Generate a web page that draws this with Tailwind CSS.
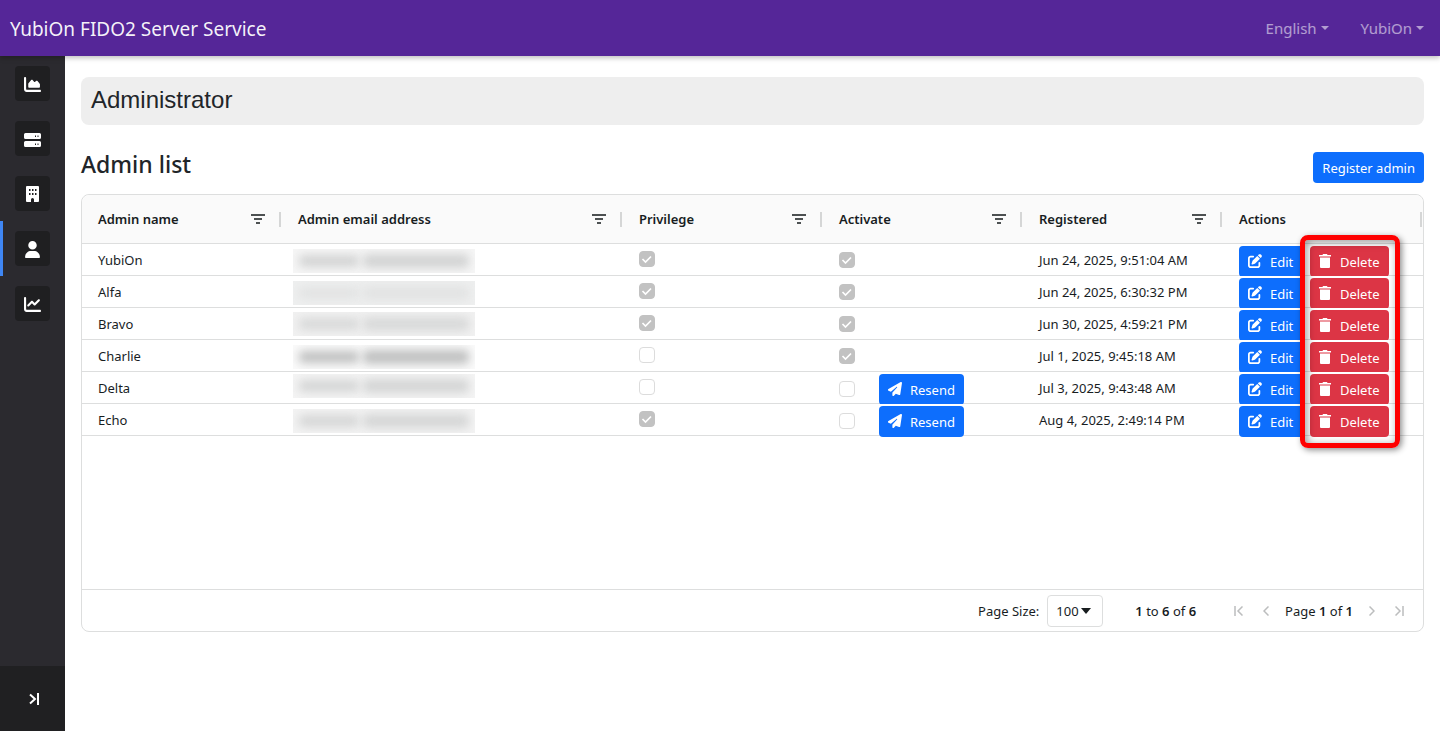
<!DOCTYPE html>
<html lang="en">
<head>
<meta charset="utf-8">
<meta name="viewport" content="width=device-width, initial-scale=1">
<title>YubiOn FIDO2 Server Service</title>
<script src="https://cdn.jsdelivr.net/npm/@tailwindcss/browser@4"></script>
</head>
<body class="flex min-h-screen flex-col bg-white font-['Segoe_UI','Noto_Sans',sans-serif] text-[13px] text-[#181d1f]">
<svg class="hidden" aria-hidden="true">
  <symbol id="area" viewBox="0 0 512 512"><path d="M64 64c0-17.7-14.3-32-32-32S0 46.3 0 64V400c0 44.2 35.8 80 80 80H480c17.7 0 32-14.3 32-32s-14.3-32-32-32H80c-8.8 0-16-7.2-16-16V64zm96 288H448c17.7 0 32-14.3 32-32V251.8c0-7.6-2.7-15-7.7-20.8l-65.8-76.8c-12.1-14.2-33.7-15-46.9-1.8l-21 21c-10 10-26.4 9.2-35.4-1.6l-39.2-47c-12.6-15.1-35.7-15.4-48.7-.6L135.9 215c-5.1 5.8-7.9 13.3-7.9 21.1v84c0 17.7 14.3 32 32 32z"/></symbol>
  <symbol id="server" viewBox="0 0 17 17"><path fill-rule="evenodd" d="M1.500 2h14A1.500 1.500 0 0 1 17 3.500v3A1.500 1.500 0 0 1 15.500 8h-14A1.500 1.500 0 0 1 0 6.500v-3A1.500 1.500 0 0 1 1.500 2ZM11 4.500v1.500h1V4.500Zm2.500 0v1.500h1V4.500ZM1.500 10h14a1.500 1.500 0 0 1 1.500 1.500v3a1.500 1.500 0 0 1-1.500 1.500h-14A1.500 1.500 0 0 1 0 14.500v-3A1.500 1.500 0 0 1 1.500 10ZM11 12.500v1.500h1v-1.500Zm2.500 0v1.500h1v-1.500Z"/></symbol>
  <symbol id="building" viewBox="0 0 13 16"><path fill-rule="evenodd" d="M1 0h11a1 1 0 0 1 1 1v14a1 1 0 0 1-1 1H8v-2.500a1.500 1.500 0 0 0-3 0V16H1a1 1 0 0 1-1-1V1a1 1 0 0 1 1-1ZM3 3v2h1.500V3Zm3 0v2h1.500V3Zm3 0v2h1.500V3ZM3 7v2h1.500V7Zm3 0v2h1.500V7Zm3 0v2h1.500V7Z"/></symbol>
  <symbol id="user" viewBox="0 0 448 512"><path d="M224 256A128 128 0 1 0 224 0a128 128 0 1 0 0 256zm-45.7 48C79.8 304 0 383.8 0 482.3C0 498.7 13.3 512 29.7 512H418.3c16.4 0 29.7-13.3 29.7-29.7C448 383.8 368.2 304 269.7 304H178.3z"/></symbol>
  <symbol id="line" viewBox="0 0 512 512"><path d="M64 64c0-17.7-14.3-32-32-32S0 46.3 0 64V400c0 44.2 35.8 80 80 80H480c17.7 0 32-14.3 32-32s-14.3-32-32-32H80c-8.8 0-16-7.2-16-16V64zm406.6 86.6c12.5-12.5 12.5-32.8 0-45.3s-32.8-12.5-45.3 0L320 210.7l-57.4-57.4c-12.5-12.5-32.8-12.5-45.3 0l-112 112c-12.5 12.5-12.5 32.8 0 45.3s32.8 12.5 45.3 0L240 221.3l57.4 57.4c12.5 12.5 32.8 12.5 45.3 0l128-128z"/></symbol>
  <symbol id="trash" viewBox="0 0 12 14"><path d="M4 0h4l.5 1H12v1.500H0V1h3.500ZM1 3.500h10V13a1 1 0 0 1-1 1H2a1 1 0 0 1-1-1Z"/></symbol>
  <symbol id="edit" viewBox="0 0 512 512"><path d="M471.6 21.7c-21.9-21.9-57.3-21.9-79.2 0L362.3 51.7l97.9 97.9 30.1-30.1c21.9-21.9 21.9-57.3 0-79.2L471.6 21.7zm-299.2 220c-6.1 6.1-10.8 13.6-13.5 21.9l-29.6 88.8c-2.9 8.6-.6 18.1 5.8 24.6s15.9 8.7 24.6 5.8l88.8-29.6c8.2-2.7 15.7-7.4 21.9-13.5L437.7 172.3 339.7 74.3 172.4 241.7zM96 64C43 64 0 107 0 160V416c0 53 43 96 96 96H352c53 0 96-43 96-96V320c0-17.7-14.3-32-32-32s-32 14.3-32 32v96c0 17.7-14.3 32-32 32H96c-17.7 0-32-14.3-32-32V160c0-17.7 14.3-32 32-32h96c17.7 0 32-14.3 32-32s-14.3-32-32-32H96z"/></symbol>
  <symbol id="plane" viewBox="0 0 512 512"><path d="M498.1 5.6c10.1 7 15.4 19.1 13.5 31.2l-64 416c-1.5 9.7-7.4 18.2-16 23s-18.9 5.4-28 1.6L284 427.7l-68.5 74.1c-8.9 9.7-22.9 12.9-35.2 8.1S160 493.2 160 480V396.4c0-4 1.5-7.8 4.2-10.7L331.8 202.8c5.8-6.3 5.6-16-.4-22s-15.7-6.4-22-.7L106 360.8 17.7 316.6C7.1 311.3 .3 300.7 0 288.9s5.9-22.8 16.1-28.7l448-256c10.7-6.1 23.9-5.5 34 1.4z"/></symbol>
  <symbol id="filter" viewBox="0 0 14 10"><path d="M0 0h14v2H0zM3 4h8v2H3zM5 8h4v2H5z"/></symbol>
  <symbol id="check" viewBox="0 0 16 16"><path d="M3.500 8 6.500 11 12 5.500" fill="none" stroke="#fff" stroke-width="1.700"/></symbol>
</svg>

<header class="relative z-10 flex h-14 items-center justify-between bg-[#552698] pr-4 pl-[10px] shadow-[0_2px_5px_rgba(0,0,0,0.25)]">
  <a href="#" class="pt-[2px] text-[19px] text-white/95">YubiOn FIDO2 Server Service</a>
  <nav class="flex gap-8 text-[15px] text-white/55">
    <button type="button" class="flex items-center gap-1">English <svg class="h-1 w-2 fill-current" viewBox="0 0 8 4"><path d="M0 0h8L4 4z"/></svg></button>
    <button type="button" class="flex items-center gap-1">YubiOn <svg class="h-1 w-2 fill-current" viewBox="0 0 8 4"><path d="M0 0h8L4 4z"/></svg></button>
  </nav>
</header>

<div class="flex grow">
  <aside class="flex w-[65px] shrink-0 flex-col justify-between bg-[#2b2a2f]">
    <nav class="flex flex-col">
      <a href="#" aria-label="Dashboard" class="flex h-[55px] items-center justify-center"><span class="flex size-[35px] items-center justify-center rounded bg-[#1f1f21] pt-px"><svg class="size-[17px] fill-white"><use href="#area"/></svg></span></a>
      <a href="#" aria-label="Servers" class="flex h-[55px] items-center justify-center"><span class="flex size-[35px] items-center justify-center rounded bg-[#1f1f21] pt-px"><svg class="size-[17px] fill-white"><use href="#server"/></svg></span></a>
      <a href="#" aria-label="Company" class="flex h-[55px] items-center justify-center"><span class="flex size-[35px] items-center justify-center rounded bg-[#1f1f21] pt-px"><svg class="h-4 w-[13px] fill-white"><use href="#building"/></svg></span></a>
      <a href="#" aria-label="Administrator" aria-current="page" class="flex h-[55px] items-center justify-center border-l-3 border-[#3f86f4] pr-[3px]"><span class="flex size-[35px] items-center justify-center rounded bg-[#1f1f21] pt-px"><svg class="size-[17px] fill-white"><use href="#user"/></svg></span></a>
      <a href="#" aria-label="Reports" class="flex h-[55px] items-center justify-center"><span class="flex size-[35px] items-center justify-center rounded bg-[#1f1f21] pt-px"><svg class="size-[17px] fill-white"><use href="#line"/></svg></span></a>
    </nav>
    <button type="button" aria-label="Expand menu" class="flex h-[65px] items-center justify-center bg-[#202022] pl-[3px]">
      <svg class="h-3 w-[10px]" viewBox="0 0 10 12" fill="none" stroke="#fff" stroke-width="2"><path d="M1 1.500 6 6 1 10.500M9 0v12"/></svg>
    </button>
  </aside>

  <main class="flex min-w-0 grow flex-col px-4 pt-[21px]">
    <h1 class="rounded-lg bg-[#eee] px-[10px] pt-[5px] pb-[7px] font-['Liberation_Sans',Arial,sans-serif] text-[24px] leading-9 text-[#212529]">Administrator</h1>
    <div class="mt-[21px] flex h-12 items-start justify-between">
      <h2 class="text-[23px] leading-9 font-medium text-[#212529]">Admin list</h2>
      <button type="button" class="mt-[6px] h-[31px] rounded bg-[#0d6efd] px-[9px] pt-[2px] text-[13px] text-white">Register admin</button>
    </div>

    <section class="relative rounded-lg border border-[#dddede]">
      <div class="h-[394px]">
        <table class="w-full table-fixed border-separate border-spacing-0 text-left">
          <colgroup><col class="w-[200px]"><col><col class="w-[200px]"><col class="w-[200px]"><col class="w-[200px]"><col class="w-[200px]"></colgroup>
          <thead><tr id="head"></tr></thead>
          <tbody id="rows"></tbody>
        </table>
      </div>
      <div class="flex h-[42px] items-center justify-end border-t border-[#dddede] pr-[19px]">
        <label for="size" class="mr-2 pt-[2px]">Page Size:</label>
        <div class="relative mr-8 flex items-center">
          <select id="size" class="h-8 w-14 appearance-none rounded border border-[#dddede] bg-white pt-[2px] pl-2"><option>100</option></select>
          <svg class="pointer-events-none absolute right-3 h-[6px] w-[10px]" viewBox="0 0 10 6" fill="#181d1f"><path d="M0 0h10L5 6z"/></svg>
        </div>
        <span class="mr-[38px] pt-[2px]"><b class="font-semibold">1</b> to <b class="font-semibold">6</b> of <b class="font-semibold">6</b></span>
        <button type="button" disabled aria-label="First page" class="mr-5"><svg class="h-[10px] w-[9px]" viewBox="0 0 9 10" fill="none" stroke="#bcbdbe" stroke-width="1.500"><path d="M1 0v10M8.500.5 4 5l4.500 4.500"/></svg></button>
        <button type="button" disabled aria-label="Previous page" class="mr-4"><svg class="h-[10px] w-[6px]" viewBox="0 0 6 10" fill="none" stroke="#bcbdbe" stroke-width="1.500"><path d="M5.500.5 1 5l4.500 4.500"/></svg></button>
        <span class="pt-[2px]">Page <b class="font-semibold">1</b> of <b class="font-semibold">1</b></span>
        <button type="button" disabled aria-label="Next page" class="ml-4"><svg class="h-[10px] w-[6px]" viewBox="0 0 6 10" fill="none" stroke="#bcbdbe" stroke-width="1.500"><path d="M.5.5 5 5 .5 9.500"/></svg></button>
        <button type="button" disabled aria-label="Last page" class="ml-5"><svg class="h-[10px] w-[9px]" viewBox="0 0 9 10" fill="none" stroke="#bcbdbe" stroke-width="1.500"><path d="M8 0v10M.5.5 5 5 .5 9.500"/></svg></button>
      </div>
      <!-- Highlight around the delete buttons -->
      <div class="pointer-events-none absolute top-10 right-[23px] h-[213px] w-[100px] rounded-lg border-5 border-[#fe0000] shadow-[2px_2px_6px_rgba(0,0,0,0.45),inset_2px_2px_8px_rgba(0,0,0,0.4)]"></div>
    </section>
  </main>
</div>

<script>
const heads = ['Admin name', 'Admin email address', 'Privilege', 'Activate', 'Registered', 'Actions'];
document.getElementById('head').innerHTML = heads.map((h, i) => `
  <th scope="col" class="h-[49px] border-b border-[#dddede] bg-[#fafafa] p-0 font-semibold ${i === 0 ? 'rounded-tl-lg' : ''} ${i === 5 ? 'rounded-tr-lg' : ''}">
    <div class="flex items-center justify-between pl-4">
      <span class="pt-[2px]">${h}</span>
      <span class="flex items-center gap-[14px]">
        ${i < 5 ? `<button type="button" aria-label="Filter ${h}"><svg class="h-[10px] w-[14px] fill-[#4d5152]"><use href="#filter"/></svg></button>` : ''}
        <span class="mr-px h-[15px] w-[2px] bg-[#d5d6d6]"></span>
      </span>
    </div>
  </th>`).join('');

const data = [
  ['YubiOn', 1, 1, 'Jun 24, 2025, 9:51:04 AM', 'mt-[5px]', 'bg-[#f6f6f6]', 'bg-[#d2d3d3]'],
  ['Alfa', 1, 1, 'Jun 24, 2025, 6:30:32 PM', 'mt-[5px]', 'bg-[#eeefef]', 'bg-[#e2e3e3]'],
  ['Bravo', 1, 1, 'Jun 30, 2025, 4:59:21 PM', 'mt-[4px]', 'bg-[#f1f1f1]', 'bg-[#d8d9d9]'],
  ['Charlie', 0, 1, 'Jul 1, 2025, 9:45:18 AM', 'mt-[5px]', 'bg-[#fafafa]', 'bg-[#bfc0c0]'],
  ['Delta', 0, 0, 'Jul 3, 2025, 9:43:48 AM', 'mt-[2px]', 'bg-[#f4f4f4]', 'bg-[#d4d5d5]'],
  ['Echo', 1, 0, 'Aug 4, 2025, 2:49:14 PM', 'mt-[5px]', 'bg-[#f3f3f3]', 'bg-[#d5d6d6]'],
];
const box = (on, label) => `
  <span class="grid size-4">
    <input type="checkbox" disabled ${on ? 'checked' : ''} aria-label="${label}" class="col-start-1 row-start-1 size-4 appearance-none rounded border border-[#dcdcdc] bg-white checked:border-[#c2c2c2] checked:bg-[#c2c2c2]">
    ${on ? '<svg class="col-start-1 row-start-1 size-4"><use href="#check"/></svg>' : ''}
  </span>`;
document.getElementById('rows').innerHTML = data.map(([name, priv, act, date, top, bg, ink]) => `
  <tr class="relative bg-white *:h-8 *:border-b *:border-[#dddede] *:p-0 *:pl-4 *:align-top">
    <td><div class="h-[31px] leading-8">${name}</div></td>
    <td><div class="-ml-[5px] h-[31px]"><div class="inline-flex h-6 w-[182px] items-center gap-1 overflow-hidden px-[6px] ${top} ${bg}" role="img" aria-label="Hidden email address">
      <span class="h-3 w-[60px] rounded blur-[5px] ${ink}"></span><span class="h-[14px] grow rounded blur-[5px] ${ink}"></span></div></div></td>
    <td><div class="flex h-[31px] pt-[7px]">${box(priv, name + ' privilege')}</div></td>
    <td><div class="flex h-[31px] items-start gap-6"><span class="${act ? 'pt-2' : 'pt-[9px]'}">${box(act, name + ' active')}</span>
      ${act ? '' : `<button type="button" class="mt-[2px] flex h-[31px] shrink-0 items-center gap-2 rounded bg-[#0d6efd] px-[9px] text-white"><svg class="mb-[2px] size-[14px] fill-white"><use href="#plane"/></svg><span class="pt-[2px]">Resend</span></button>`}</div></td>
    <td><div class="h-[31px] leading-8">${date}</div></td>
    <td><div class="flex h-[31px] items-start gap-[6px] pt-[2px]">
      <button type="button" class="flex h-[31px] w-[65px] shrink-0 items-center gap-2 rounded bg-[#0d6efd] pl-[9px] text-white"><svg class="mb-[2px] size-[14px] fill-white"><use href="#edit"/></svg><span class="pt-[2px]">Edit</span></button>
      <button type="button" class="flex h-[31px] w-[79px] shrink-0 items-center gap-[9px] rounded bg-[#dc3545] pl-[9px] text-white"><svg class="mb-[2px] h-[14px] w-3 fill-white"><use href="#trash"/></svg><span class="pt-[2px]">Delete</span></button>
    </div></td>
  </tr>`).join('');
</script>
</body>
</html>
